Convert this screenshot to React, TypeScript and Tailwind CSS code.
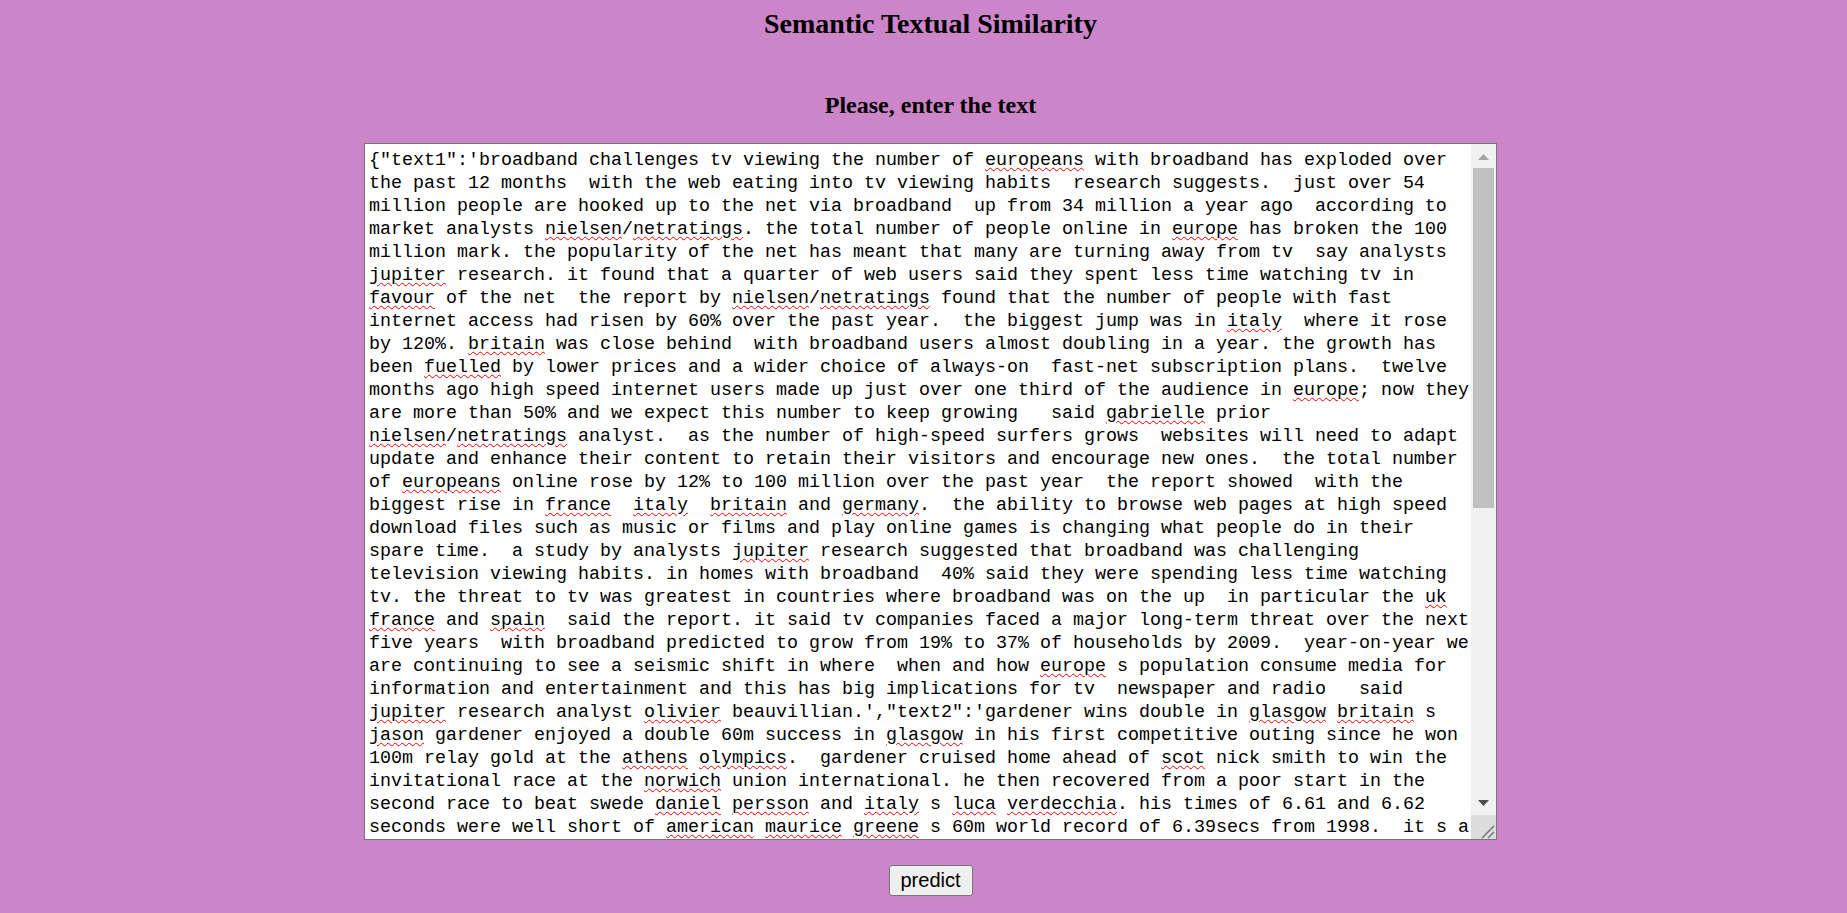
const TEXT =
  `{"text1":'broadband challenges tv viewing the number of ~europeans~ with broadband has exploded over the past 12 months  with the web eating into tv viewing habits  research suggests.  just over 54 million people are hooked up to the net via broadband  up from 34 million a year ago  according to market analysts ~nielsen~/~netratings~. the total number of people online in ~europe~ has broken the 100 million mark. the popularity of the net has meant that many are turning away from tv  say analysts ~jupiter~ research. it found that a quarter of web users said they spent less time watching tv in ~favour~ of the net  the report by ~nielsen~/~netratings~ found that the number of people with fast internet access had risen by 60% over the past year.  the biggest jump was in ~italy~  where it rose by 120%. ~britain~ was close behind  with broadband users almost doubling in a year. the growth has been ~fuelled~ by lower prices and a wider choice of always-on  fast-net subscription plans.  twelve months ago high speed internet users made up just over one third of the audience in ~europe~; now they are more than 50% and we expect this number to keep growing   said ~gabrielle~ prior ~nielsen~/~netratings~ analyst.  as the number of high-speed surfers grows  websites will need to adapt  update and enhance their content to retain their visitors and encourage new ones.  the total number of ~europeans~ online rose by 12% to 100 million over the past year  the report showed  with the biggest rise in ~france~  ~italy~  ~britain~ and ~germany~.  the ability to browse web pages at high speed  download files such as music or films and play online games is changing what people do in their spare time.  a study by analysts ~jupiter~ research suggested that broadband was challenging television viewing habits. in homes with broadband  40% said they were spending less time watching tv. the threat to tv was greatest in countries where broadband was on the up  in particular the ~uk~  ~france~ and ~spain~  said the report. it said tv companies faced a major long-term threat over the next five years  with broadband predicted to grow from 19% to 37% of households by 2009.  year-on-year we are continuing to see a seismic shift in where  when and how ~europe~ s population consume media for information and entertainment and this has big implications for tv  newspaper and radio   said ~jupiter~ research analyst ~olivier~ beauvillian.',"text2":'gardener wins double in ~glasgow~ ~britain~ s ~jason~ gardener enjoyed a double 60m success in ~glasgow~ in his first competitive outing since he won 100m relay gold at the ~athens~ ~olympics~.  gardener cruised home ahead of ~scot~ nick smith to win the invitational race at the ~norwich~ union international. he then recovered from a poor start in the second race to beat swede ~daniel~ ~persson~ and ~italy~ s ~luca~ ~verdecchia~. his times of 6.61 and 6.62 seconds were well short of ~american~ ~maurice~ ~greene~ s 60m world record of 6.39secs from 1998.  it s a good way to start the year  said gardener.  i was happy with the way i ran and i am looking forward to the rest of the indoor season.'}`;

function Scrollbar() {
  return (
    <div className="flex w-[25px] flex-col bg-[#f1f1f1]">
      <div className="flex h-[24px] items-center justify-center pt-[1px]">
        <svg width="11" height="6" viewBox="0 0 11 6">
          <path d="M5.5 0L11 6H0z" fill="#a3a3a3" />
        </svg>
      </div>
      <div className="flex-1 px-[2px]">
        <div className="h-[340px] bg-[#c1c1c1]" />
      </div>
      <div className="flex h-[25px] items-center justify-center">
        <svg width="11" height="6" viewBox="0 0 11 6">
          <path d="M0 0H11L5.5 6z" fill="#505050" />
        </svg>
      </div>
      <div className="h-[24px] bg-[#dcdcdc]">
        <svg width="25" height="24" viewBox="0 0 25 24">
          <path d="M11 23L23 11M17 23L23 17" stroke="#6b6b6b" strokeWidth="1.3" fill="none" />
        </svg>
      </div>
    </div>
  );
}

export default function App() {
  const parts = TEXT.split('~');

  return (
    <div className="flex min-h-screen flex-col items-center bg-[#cc85c9] pl-[14px] font-['Liberation_Serif',serif] text-black">
      <h1 className="mt-[8px] text-[28px] font-bold leading-[32px]">Semantic Textual Similarity</h1>
      <h2 className="mt-[51px] text-[24px] font-bold leading-[28px]">Please, enter the text</h2>

      <div className="mt-[24px] flex h-[697px] w-[1133px] border border-[#767676] bg-white">
        <div
          role="textbox"
          aria-multiline="true"
          className="min-w-0 flex-1 overflow-hidden whitespace-pre-wrap break-words pl-[4px] pt-[5px] font-['Liberation_Mono',monospace] text-[18.333px] leading-[23px] text-black"
        >
          {parts.map((p, i) =>
            i % 2 === 1 ? (
              <span key={i} className="underline decoration-[#ee0000] decoration-wavy decoration-1 underline-offset-[2px]">
                {p}
              </span>
            ) : (
              p
            )
          )}
        </div>
        <Scrollbar />
      </div>

      <button className="mt-[25px] h-[31px] w-[84px] rounded-[3px] border border-[#767676] bg-[#efefef] font-['Liberation_Sans',Arial,sans-serif] text-[20px] leading-[23px] text-black">
        predict
      </button>
    </div>
  );
}
